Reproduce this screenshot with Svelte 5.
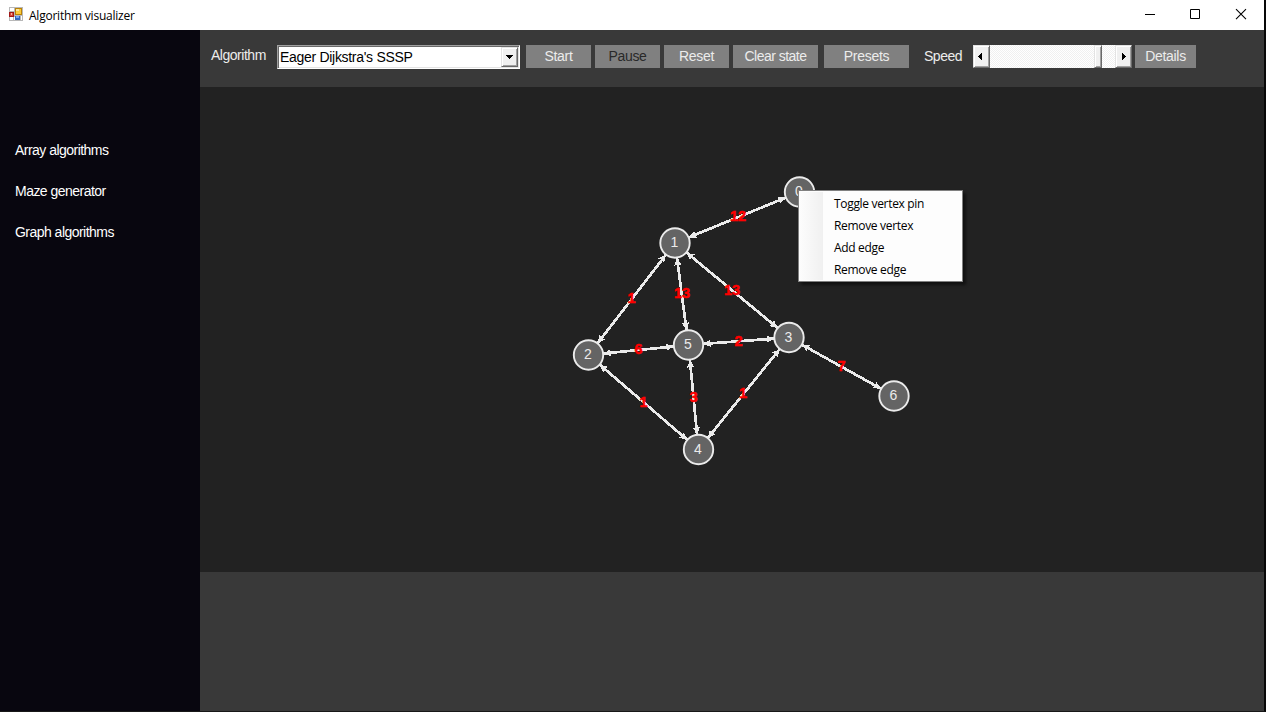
<script>
  const links = ['Array algorithms', 'Maze generator', 'Graph algorithms'];

  const nodes = [
    { x: 799.5, y: 192 },
    { x: 675, y: 243 },
    { x: 588.5, y: 355 },
    { x: 789, y: 337.5 },
    { x: 698.5, y: 449.5 },
    { x: 688.5, y: 345 },
    { x: 894, y: 396 }
  ];

  const edges = [
    [0, 1, 12, 738, 216], [1, 2, 1, 631.5, 298], [1, 5, 13, 682, 293], [1, 3, 13, 732, 290],
    [2, 5, 6, 638.5, 349], [5, 3, 2, 738.5, 341], [2, 4, 1, 643.5, 401.5],
    [5, 4, 3, 693.5, 397], [3, 4, 1, 743, 393], [3, 6, 7, 841.5, 365.5]
  ].map(([a, b, weight, lx, ly]) => {
    const p = nodes[a], q = nodes[b];
    const len = Math.hypot(q.x - p.x, q.y - p.y);
    const ux = (q.x - p.x) / len, uy = (q.y - p.y) / len;
    const x1 = p.x + ux * 15, y1 = p.y + uy * 15;
    const x2 = q.x - ux * 15, y2 = q.y - uy * 15;
    const head = (x, y, s) =>
      `${x},${y} ${x + s * ux * 7.5 - uy * 3.7},${y + s * uy * 7.5 + ux * 3.7} ${x + s * ux * 6.5},${y + s * uy * 6.5} ${x + s * ux * 7.5 + uy * 3.7},${y + s * uy * 7.5 - ux * 3.7}`;
    return { x1, y1, x2, y2, weight, lx, ly, start: head(x1, y1, 1), end: head(x2, y2, -1) };
  });

  const menu = ['Toggle vertex pin', 'Remove vertex', 'Add edge', 'Remove edge'];
</script>

<div class="window">
  <header class="titlebar">
    <svg class="appicon" width="14" height="14" viewBox="0 0 14 14" shape-rendering="crispEdges">
      <path fill="#b8b8b8" d="M0 0h14v14H0z" />
      <path fill="#fff" d="M1 1h4v3H1zM1 10h3v3H1zM5 10h1v3H5zM12 9h1v4h-1z" />
      <path fill="#a01818" d="M0 5h5v5H0z" />
      <path fill="#d84a3a" d="M1 6h3v3H1z" />
      <path fill="#f6b0a0" d="M2 6h1v2H2z" />
      <path fill="#b98208" d="M6 1h7v7H6z" />
      <path fill="#fbcb3a" d="M7 2h5v5H7z" />
      <path fill="#ffe79a" d="M7 2h3v2H7z" />
      <path fill="#3267c0" d="M6 9h5v4H6z" />
      <path fill="#75a6f0" d="M7 9h3v2H7z" />
    </svg>
    <span class="title">Algorithm visualizer</span>
    <svg class="controls" width="112" height="14" viewBox="0 0 112 14">
      <path d="M4 7.500h10" stroke="#000" />
      <path d="M49.500 2.500h9v9h-9z" fill="none" stroke="#000" />
      <path d="M95 2.200l10 10M105 2.200l-10 10" stroke="#000" stroke-width="1.100" />
    </svg>
  </header>

  <div class="body">
    <nav class="sidebar">
      {#each links as link}
        <a href="#top">{link}</a>
      {/each}
    </nav>

    <main>
      <div class="toolbar">
        <span class="label algo">Algorithm</span>
        <div class="combo">
          <span>Eager Dijkstra's SSSP</span>
          <div class="drop"><svg width="7" height="4" viewBox="0 0 7 4" shape-rendering="crispEdges"><path d="M0 0h7v1H0zM1 1h5v1H1zM2 2h3v1H2zM3 3h1v1H3z" /></svg></div>
        </div>
        <button class="start">Start</button>
        <button class="pause" disabled>Pause</button>
        <button class="reset">Reset</button>
        <button class="clear">Clear state</button>
        <button class="presets">Presets</button>
        <span class="label speed">Speed</span>
        <div class="scroll">
          <div class="arrow left"><svg width="4" height="7" viewBox="0 0 4 7" shape-rendering="crispEdges"><path d="M3 0h1v7H3zM2 1h1v5H2zM1 2h1v3H1zM0 3h1v1H0z" /></svg></div>
          <div class="track"></div>
          <div class="thumb"></div>
          <div class="rest"></div>
          <div class="arrow"><svg width="4" height="7" viewBox="0 0 4 7" shape-rendering="crispEdges"><path d="M0 0h1v7H0zM1 1h1v5H1zM2 2h1v3H2zM3 3h1v1H3z" /></svg></div>
        </div>
        <button class="details">Details</button>
      </div>

      <div class="canvas">
        <svg width="1064" height="485" viewBox="200 87 1064 485">
          {#each edges as e}
            <g shape-rendering="crispEdges" fill="#ebebeb" stroke="#ebebeb">
              <line x1={e.x1} y1={e.y1} x2={e.x2} y2={e.y2} stroke-width="2.700" />
              <polygon points={e.start} stroke="none" />
              <polygon points={e.end} stroke="none" />
            </g>
          {/each}
          {#each edges as e}
            <text class="weight" x={e.lx} y={e.ly + 5}>{e.weight}</text>
          {/each}
          {#each nodes as n, i}
            <circle cx={n.x} cy={n.y} r="14.700" />
            <text class="vertex" x={n.x - 0.5} y={n.y + 4}>{i}</text>
          {/each}
        </svg>
        <div class="menu">
          {#each menu as item}
            <div class="item">{item}</div>
          {/each}
        </div>
      </div>

      <div class="footer"></div>
    </main>
  </div>
</div>

<style>
  :global(body) { margin: 0; background: #080808; overflow: hidden; }
  .window {
    width: 1264px; height: 711px;
    display: flex; flex-direction: column;
    border-right: 2px solid #080808; border-bottom: 1px solid #181818;
    font-family: "Liberation Sans", Arial, sans-serif; font-size: 14px; letter-spacing: -0.300px;
  }
  .titlebar { height: 30px; background: #fff; display: flex; align-items: center; box-sizing: border-box; padding: 0 11px 2px 9px; }
  .title { margin-left: 6px; margin-top: 2px; font: 12px "Open Sans", "Noto Sans", sans-serif; letter-spacing: -0.230px; color: #000; white-space: nowrap; }
  .controls { margin-left: auto; }
  .body { flex: 1; display: flex; min-height: 0; }
  .sidebar { width: 200px; background: #08060f; box-sizing: border-box; padding: 100px 0 0 15px; display: flex; flex-direction: column; letter-spacing: -0.530px; }
  .sidebar a { height: 41px; line-height: 41px; color: #fff; text-decoration: none; white-space: nowrap; }
  main { flex: 1; display: flex; flex-direction: column; }
  .toolbar { height: 57px; background: #393939; display: flex; align-items: flex-start; box-sizing: border-box; padding: 15px 0 0 11px; }
  .label { color: #ececec; line-height: 23px; flex: none; letter-spacing: -0.480px; }
  .algo { width: 66px; margin-top: -1px; }
  .speed { width: 49px; margin-left: 15px; }
  .combo {
    width: 243px; height: 24px; box-sizing: border-box; background: #fff; color: #000;
    border: 1px solid #a0a0a0; border-right-color: #fff; border-bottom-color: #fff;
    box-shadow: inset 1px 1px #696969, inset -1px -1px #e3e3e3;
    display: flex; justify-content: space-between; line-height: 20px; padding: 1px 1px 1px 2px;
  }
  .drop, .arrow {
    box-sizing: border-box; background: #f0f0f0; display: flex; align-items: center; justify-content: center;
    border: 1px solid #e3e3e3; border-right-color: #696969; border-bottom-color: #696969;
    box-shadow: inset 1px 1px #fff, inset -1px -1px #a0a0a0;
  }
  .drop { width: 17px; height: 20px; }
  button {
    height: 23px; padding: 0; border: 0; border-radius: 0; background: #808080; color: #ececec;
    font: inherit; letter-spacing: -0.300px; line-height: 23px; flex: none;
  }
  .start, .pause, .reset { width: 65px; }
  .start { margin-left: 6px; }
  .pause, .reset, .clear { margin-left: 4px; }
  .pause { color: #292929; }
  .clear, .presets { width: 85px; }
  .clear { letter-spacing: -0.520px; }
  .presets { margin-left: 6px; }
  .details { width: 61px; margin-left: 3px; }
  .scroll { width: 159px; height: 23px; display: flex; }
  .arrow { width: 17px; }
  .left { padding-right: 4px; }
  .track, .rest { background: repeating-conic-gradient(#f0f0f0 0 25%, #fff 0 50%) 0 0 / 2px 2px; }
  .track { width: 104px; }
  .thumb { width: 8px; box-sizing: border-box; background: #f0f0f0; border: 1px solid #e3e3e3; border-right-color: #696969; border-bottom-color: #696969; box-shadow: inset 1px 1px #fff, inset -1px -1px #a0a0a0; }
  .rest { width: 13px; }
  .canvas { position: relative; height: 485px; background: #222; }
  .canvas svg { display: block; }
  circle { fill: #646464; stroke: #ebebeb; stroke-width: 1.900; }
  text { text-anchor: middle; letter-spacing: 0; }
  .vertex { font-size: 14px; fill: #ebebeb; }
  .weight { font-size: 14.500px; font-weight: bold; fill: #f00; stroke: #f00; stroke-width: 0.500px; }
  .menu {
    position: absolute; left: 598px; top: 103px; width: 165px; height: 92px; box-sizing: border-box;
    border: 1px solid #808080; padding: 1px;
    background: linear-gradient(to right, #fcfcfc, #f0f0f0) 1px 1px / 23px 88px no-repeat, #fdfdfd;
    box-shadow: 3px 3px 3px rgba(0, 0, 0, 0.500);
  }
  .item { height: 22px; line-height: 23px; padding-left: 34px; font-family: "Open Sans", "Noto Sans", sans-serif; font-size: 12px; letter-spacing: -0.320px; color: #000; white-space: nowrap; }
  .footer { flex: 1; background: #393939; }
</style>
